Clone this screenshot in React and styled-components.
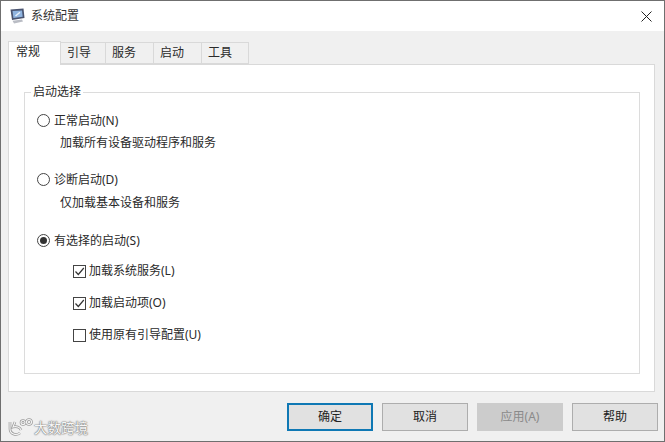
import React from 'react';
import styled, { createGlobalStyle } from 'styled-components';

const Global = createGlobalStyle`
  html, body { margin: 0; padding: 0; background: #f0f0f0; }
  * { box-sizing: border-box; }
`;

const Window = styled.div`
  position: relative;
  width: 665px;
  height: 442px;
  display: flex;
  flex-direction: column;
  background: #f0f0f0;
  border: 1px solid #6f6f6f;
  color: #2a2a2a;
  font: 12px/18px "Noto Sans", "Noto Sans CJK SC", sans-serif;
  overflow: hidden;
`;

const TitleBar = styled.div`
  height: 30px;
  flex: none;
  display: flex;
  align-items: center;
  gap: 6px;
  padding: 0 12px 0 9px;
  background: #fff;
  color: #333;
`;

const Title = styled.span`
  flex: 1;
  padding-bottom: 1px;
`;

const Body = styled.div`
  flex: 1;
  display: flex;
  flex-direction: column;
  padding: 10px 9px 10px 7px;
`;

const TabRow = styled.div`
  height: 23px;
  flex: none;
  display: flex;
  align-items: flex-end;
  position: relative;
  z-index: 1;
`;

const Tab = styled.div`
  width: ${(p) => p.$w}px;
  height: ${(p) => (p.$active ? 24 : 22)}px;
  display: flex;
  align-items: center;
  padding-left: ${(p) => (p.$active ? 7 : 6)}px;
  padding-bottom: ${(p) => (p.$active ? 3 : 1)}px;
  margin-bottom: ${(p) => (p.$active ? -1 : 0)}px;
  background: ${(p) => (p.$active ? '#fff' : '#f0f0f0')};
  border: 1px solid #d9d9d9;
  border-left-width: ${(p) => (p.$active ? 1 : 0)}px;
  border-bottom-width: ${(p) => (p.$active ? 0 : 1)}px;
`;

const Panel = styled.div`
  height: 328px;
  flex: none;
  padding: 18px 14px 17px 15px;
  background: #fff;
  border: 1px solid #d9d9d9;
`;

const Group = styled.fieldset`
  height: 100%;
  margin: 0;
  padding: 10px 0 0 12px;
  border: 1px solid #dcdcdc;
  min-width: 0;
`;

const Legend = styled.legend`
  margin-left: -6px;
  padding: 0 2px;
  line-height: 18px;
`;

const Row = styled.div`
  height: 18px;
  display: flex;
  align-items: center;
  margin-top: ${(p) => p.$top || 0}px;
  margin-left: ${(p) => p.$indent || 0}px;
  white-space: nowrap;
`;

const Label = styled.span`
  padding-top: 1px;
`;

const Radio = styled.span`
  width: 13px;
  height: 13px;
  flex: none;
  margin-right: 4px;
  display: flex;
  align-items: center;
  justify-content: center;
  border: 1px solid #444;
  border-radius: 50%;
  background: #fff;
  &::after {
    content: '';
    display: ${(p) => (p.$on ? 'block' : 'none')};
    width: 7px;
    height: 7px;
    border-radius: 50%;
    background: #333;
  }
`;

const Box = styled.span`
  width: 13px;
  height: 13px;
  flex: none;
  margin-right: 3px;
  display: flex;
  border: 1px solid #444;
  background: #fff;
`;

const Footer = styled.div`
  display: flex;
  justify-content: flex-end;
  gap: 9px;
  margin-top: 11px;
  margin-right: -3px;
`;

const Button = styled.div`
  width: 86px;
  height: 28px;
  display: flex;
  align-items: center;
  justify-content: center;
  background: ${(p) => (p.$disabled ? '#cccccc' : '#e1e1e1')};
  color: ${(p) => (p.$disabled ? '#8a8a8a' : '#222')};
  border: ${(p) => (p.$primary ? '2px solid #0f78b4' : p.$disabled ? '1px solid #cccccc' : '1px solid #adadad')};
`;

const Watermark = styled.div`
  position: absolute;
  left: 6px;
  bottom: 3px;
  display: flex;
  align-items: center;
  gap: 1px;
  color: #f6f6f6;
  font-size: 13.5px;
  line-height: 20px;
  text-shadow: 0 0 1px #777, 0 0 2px #888, 0 0 1px #777;
`;

function AppIcon() {
  return (
    <svg width="15" height="16" viewBox="0 0 15 16">
      <path d="M0.5 1.5 L13.5 0.5 L14.5 10 L2 12 Z" fill="#4a5470" />
      <path d="M2.5 3 L12 2.5 L12.7 8.8 L3.4 10 Z" fill="#8fb4e0" />
      <path d="M5.5 8 L10 4.2" stroke="#e8f0fa" strokeWidth="1.5" />
      <path d="M2.5 12.8 L12 11.5 L13 13.5 L4 15.5 Z" fill="#b9bcc4" />
    </svg>
  );
}

function CloseIcon() {
  return (
    <svg width="11" height="11" viewBox="0 0 11 11">
      <path d="M0.5 0.5 L10.5 10.5 M10.5 0.5 L0.5 10.5" stroke="#222" strokeWidth="1" fill="none" />
    </svg>
  );
}

function Check({ on, children, top }) {
  return (
    <Row $top={top} $indent={36}>
      <Box>
        {on && (
          <svg width="11" height="11" viewBox="0 0 11 11">
            <path d="M1.5 5.5 L4.3 8.5 L9.8 2" stroke="#333" strokeWidth="1.2" fill="none" />
          </svg>
        )}
      </Box>
      {children}
    </Row>
  );
}

const logoShapes = (
  <>
    <path d="M3 4 V11 C3 16 9 18 13 15" />
    <path d="M8 4 L6 9 C9 8 13 9 14 12" />
    <circle cx="16" cy="4.5" r="2" />
    <circle cx="22" cy="4" r="2.5" />
  </>
);

function WatermarkLogo() {
  return (
    <svg width="26" height="20" viewBox="0 0 26 20" fill="none">
      <g stroke="#9a9a9a" strokeWidth="2.6">{logoShapes}</g>
      <g stroke="#f6f6f6" strokeWidth="1.1">{logoShapes}</g>
    </svg>
  );
}

const tabs = [
  ['常规', 53],
  ['引导', 45],
  ['服务', 48],
  ['启动', 48],
  ['工具', 47],
];

export default function App() {
  return (
    <>
      <Global />
      <Window>
        <TitleBar>
          <AppIcon />
          <Title>系统配置</Title>
          <CloseIcon />
        </TitleBar>
        <Body>
          <TabRow>
            {tabs.map(([label, w], i) => (
              <Tab key={label} $w={w} $active={i === 0}>
                {label}
              </Tab>
            ))}
          </TabRow>
          <Panel>
            <Group>
              <Legend>启动选择</Legend>
              <Row>
                <Radio />
                <Label>正常启动(N)</Label>
              </Row>
              <Row $top={5} $indent={23}>
                加载所有设备驱动程序和服务
              </Row>
              <Row $top={18}>
                <Radio />
                <Label>诊断启动(D)</Label>
              </Row>
              <Row $top={6} $indent={23}>
                仅加载基本设备和服务
              </Row>
              <Row $top={19}>
                <Radio $on />
                <Label>有选择的启动(S)</Label>
              </Row>
              <Check on top={13}>加载系统服务(L)</Check>
              <Check on top={14}>加载启动项(O)</Check>
              <Check top={14}>使用原有引导配置(U)</Check>
            </Group>
          </Panel>
          <Footer>
            <Button $primary>确定</Button>
            <Button>取消</Button>
            <Button $disabled>应用(A)</Button>
            <Button>帮助</Button>
          </Footer>
        </Body>
        <Watermark>
          <WatermarkLogo />
          大数跨境
        </Watermark>
      </Window>
    </>
  );
}
